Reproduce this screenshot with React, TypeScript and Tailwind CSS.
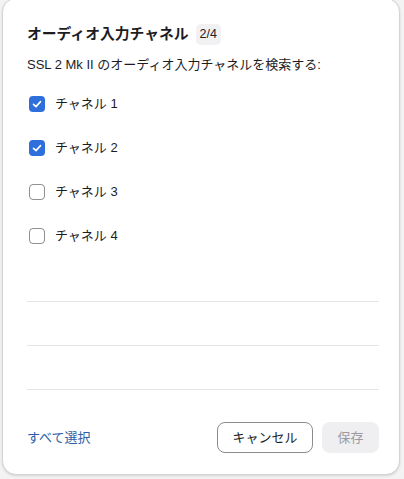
import { useState } from "react";

const font = { fontFamily: '"Liberation Sans", "Noto Sans CJK JP", sans-serif' };

function Checkbox({ checked }: { checked: boolean }) {
  if (checked) {
    return (
      <span className="flex h-4 w-4 items-center justify-center rounded-[4px] bg-[#2f6fdb]">
        <svg viewBox="0 0 16 16" className="h-4 w-4" fill="none">
          <polyline points="4.5,8.3 7,10.6 11.5,5.6" stroke="white" strokeWidth="1.6" strokeLinecap="round" strokeLinejoin="round" />
        </svg>
      </span>
    );
  }
  return <span className="block h-4 w-4 rounded-[4px] border border-[#8e8e93] bg-white" />;
}

export default function App() {
  const [checked, setChecked] = useState([true, true, false, false]);
  const rows = [0, 1, 2, 3, 4, 5, 6];

  return (
    <div className="h-[479px] w-[404px] overflow-hidden bg-[#f3f3f3] pl-[2px] pr-[4px]" style={font}>
      <div className="-mt-[2px] h-[477px] rounded-[14px] border border-[#d4d4d4] bg-white pl-[24px] pr-[20px] pt-[24px] shadow-sm">
        <div className="flex h-[22px] items-center">
          <h1 className="text-[14.8px] font-bold text-[#1d1d1f]">オーディオ入力チャネル</h1>
          <span className="ml-[7px] flex h-[21px] items-center rounded-[5px] bg-[#f1f1f3] px-[4px] text-[12.5px] text-[#222]">2/4</span>
        </div>
        <p className="mt-[10px] text-[13px] leading-[20px] text-[#1d1d1f]">SSL 2 Mk II のオーディオ入力チャネルを検索する:</p>

        <div className="mt-[7px]">
          {rows.map((i) =>
            i < 4 ? (
              <label
                key={i}
                className="flex h-[44px] cursor-pointer items-center gap-[10px] pl-[2px]"
                onClick={() => setChecked((c) => c.map((v, j) => (j === i ? !v : v)))}
              >
                <Checkbox checked={checked[i]} />
                <span className="text-[13px] text-[#1d1d1f]">チャネル {i + 1}</span>
              </label>
            ) : (
              <div key={i} className="h-[44px] border-b border-[#e4e4e6]" />
            )
          )}
        </div>

        <div className="mt-[32px] flex h-[31px] items-center">
          <button className="text-[13px] text-[#2b5ea7]">すべて選択</button>
          <div className="ml-auto flex gap-[9px]">
            <button className="h-[31px] w-[96px] rounded-[8px] border border-[#8c8c8c] text-[13px] text-[#1d1d1f]">キャンセル</button>
            <button disabled className="h-[31px] w-[57px] rounded-[8px] bg-[#efeff2] text-[13px] text-[#9b9b9f]">保存</button>
          </div>
        </div>
      </div>
    </div>
  );
}
